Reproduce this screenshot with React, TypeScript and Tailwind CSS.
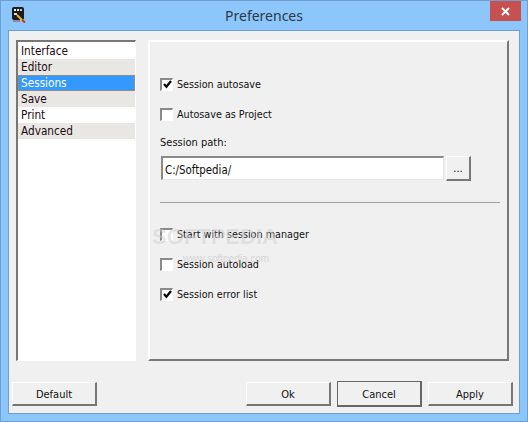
function Check({ checked }: { checked?: boolean }) {
  return (
    <span className="w-[13px] h-[13px] bg-white border-t-2 border-l-2 border-t-[#8a8a8a] border-l-[#8a8a8a] border-r border-b border-r-white border-b-white shrink-0 flex items-center justify-center">
      {checked && (
        <svg width="9" height="9" viewBox="0 0 9 9">
          <path d="M1 4 L3.4 6.8 L8 1" fill="none" stroke="#000" strokeWidth="2.2" />
        </svg>
      )}
    </span>
  );
}
function Row({ label, checked, cls }: { label: string; checked?: boolean; cls: string }) {
  return (
    <div className={`flex items-center gap-[4px] h-[16px] text-[#101010] text-[10.7px] ${cls}`}>
      <Check checked={checked} />
      <span className="mt-[2px]">{label}</span>
    </div>
  );
}
function Btn({ label, strong }: { label: string; strong?: boolean }) {
  return (
    <button
      className={
        strong
          ? "w-[85px] h-[26px] pt-[2px] bg-[#f0f0f0] border-2 border-t border-l border-[#666] text-[#101010] flex items-center justify-center"
          : "w-[85px] h-[24px] pt-[2px] bg-[#f0f0f0] border-t border-l border-white border-r-2 border-b-2 border-r-[#777] border-b-[#777] text-[#101010] flex items-center justify-center"
      }
    >
      {label}
    </button>
  );
}
export default function App() {
  const items = ["Interface", "Editor", "Sessions", "Save", "Print", "Advanced"];
  return (
    <div className="relative w-[528px] h-[422px] bg-[#8cc6fb] border border-[#6f9fd0] flex flex-col overflow-hidden text-[11px] font-['DejaVu_Sans_Condensed','Roboto',sans-serif] leading-[16px]">
      <div className="h-[29px] flex items-center relative shrink-0">
        <svg className="ml-[10px] mt-[-2px]" width="15" height="16" viewBox="0 0 15 16">
          <rect x="1" y="0" width="12" height="13" rx="2" fill="#1c1c1c" />
          <rect x="3" y="2" width="2" height="2" fill="#eee" />
          <rect x="6" y="2" width="2" height="2" fill="#eee" />
          <rect x="9" y="2" width="2" height="2" fill="#ccc" />
          <rect x="3" y="6" width="3" height="2" fill="#ddd" />
          <path d="M6 8 L12 14" stroke="#e8b820" strokeWidth="2" />
          <path d="M11 13 L14 15.5" stroke="#d03030" strokeWidth="2" />
          <path d="M2 14 H9" stroke="#a04040" strokeWidth="1" />
        </svg>
        <div className="absolute inset-x-0 top-[5px] text-center text-[14px] leading-[20px] text-[#2b3a46] font-['Noto_Sans',sans-serif]">Preferences</div>
        <div className="absolute right-[6px] top-0 w-[31px] h-[20px] bg-[#c75050] flex items-center justify-center">
          <svg width="9" height="9" viewBox="0 0 9 9">
            <path d="M1 1 L8 8 M8 1 L1 8" stroke="#fff" strokeWidth="2" />
          </svg>
        </div>
      </div>
      <div className="flex-1 mx-[7px] mb-[7px] bg-[#f0f0f0] border border-[#6f9fd0] flex flex-col">
        <div className="flex gap-[12px] pl-[7px] pr-[10px] pt-[9px]">
          <div className="w-[120px] h-[321px] bg-white border-t-2 border-l-2 border-t-[#777] border-l-[#777] border-r border-b border-r-white border-b-white pt-[1px] text-[#1a0a14] text-[11.7px]">
            {items.map((it, i) => (
              <div
                key={it}
                className={
                  it === "Sessions"
                    ? "h-[16px] pl-[3px] bg-[#3399ff] text-white outline-1 outline-dotted outline-offset-[-1px] outline-[#e08020]"
                    : i % 2 === 1
                      ? "h-[16px] pl-[3px] bg-[#e9e7e3]"
                      : "h-[16px] pl-[3px] bg-white"
                }
              >
                {it}
              </div>
            ))}
          </div>
          <div className="w-[361px] h-[321px] border-t-2 border-l-2 border-t-white border-l-white border-r-2 border-b-2 border-r-[#777] border-b-[#777] pl-[10px] pr-[7px] pt-[34px] relative">
            <Row label="Session autosave" checked cls="" />
            <Row label="Autosave as Project" cls="mt-[14px]" />
            <div className="mt-[13px] mb-[5px] text-[#101010]">Session path:</div>
            <div className="flex items-start gap-[2px] pl-[1px]">
              <div className="w-[283px] h-[24px] pt-[2px] bg-white border-t-2 border-l-2 border-t-[#8a8a8a] border-l-[#8a8a8a] border-r border-b border-r-[#e8e8e8] border-b-[#e8e8e8] pl-[2px] flex items-center text-[#101010] text-[11.4px]">
                C:/Softpedia/
              </div>
              <div className="w-[25px] h-[25px] pt-[2px] bg-[#f0f0f0] border-t border-l border-white border-r-2 border-b-2 border-r-[#777] border-b-[#777] text-[#101010] flex items-center justify-center">...</div>
            </div>
            <div className="mt-[21px] h-px bg-[#a0a0a0]"></div>
            <Row label="Start with session manager" cls="mt-[23px]" />
            <Row label="Session autoload" cls="mt-[14px]" />
            <Row label="Session error list" checked cls="mt-[14px]" />
            <div className="absolute left-[2px] top-[183px] text-[22px] leading-[24px] font-bold text-[#cfcfcf]/50 font-['Liberation_Sans',sans-serif]">SOFTPEDIA</div>
            <div className="absolute left-[33px] top-[211px] text-[10px] leading-[12px] text-[#c8c8c8]/70 font-['Liberation_Sans',sans-serif]">www.softpedia.com</div>
          </div>
        </div>
        <div className="flex items-center mt-[20px] pl-[3px] pr-[6px]">
          <Btn label="Default" />
          <div className="ml-auto flex items-center gap-[6px]">
            <Btn label="Ok" />
            <Btn label="Cancel" strong />
            <Btn label="Apply" />
          </div>
        </div>
      </div>
    </div>
  );
}
